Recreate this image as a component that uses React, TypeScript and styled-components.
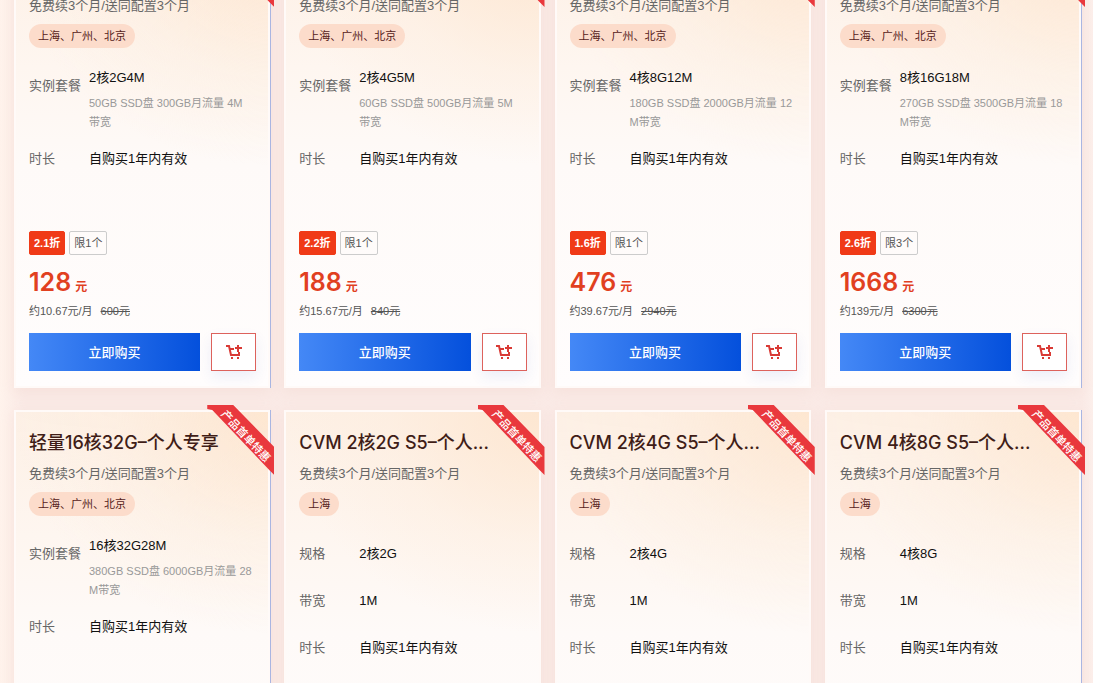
import React from "react";
import styled, { createGlobalStyle } from "styled-components";

const GlobalStyle = createGlobalStyle`
  * { box-sizing: border-box; }
  body {
    margin: 0;
    background: #faeae6;
    font-family: "Liberation Sans", "Noto Sans CJK SC", sans-serif;
    color: #111;
  }
`;

const Page = styled.main`
  height: 100vh;
  overflow: hidden;
  background: linear-gradient(90deg, #fff3ec 0, #faeae6 24px, #faeae6 99%, #fcefeb 100%);
`;

const Grid = styled.div`
  display: grid;
  grid-template-columns: repeat(4, 1fr);
  gap: 22px 14px;
  margin-top: -58px;
  padding: 0 12px 0 14px;
`;

const Card = styled.article<{ $edge: boolean }>`
  position: relative;
  display: flex;
  flex-direction: column;
  min-width: 0;
  min-height: 446px;
  padding: 13px 12px 15px 13px;
  border: 2px solid #fffaf8;
  box-shadow: ${(p) => (p.$edge ? "1px 0 0 #a9b6e2, " : "")}0 4px 12px rgba(240, 205, 195, 0.3);
  background:
    radial-gradient(ellipse 100% 50% at 100% 0, rgba(253, 228, 204, 0.8), rgba(253, 236, 220, 0.4) 60%, rgba(253, 240, 228, 0)),
    linear-gradient(180deg, #fdf0e5 0, #fef6f0 28%, #fefaf8 50%, #fffdfd 100%);
`;

const Title = styled.h3`
  height: 36px;
  margin: 0;
  overflow: hidden;
  color: #401d17;
  font-family: Inter, "Noto Sans CJK SC", sans-serif;
  font-size: 18px;
  font-weight: 500;
  line-height: 36px;
  white-space: nowrap;
`;

const Subtitle = styled.p`
  margin: 3px 0 8px;
  color: #666;
  font-size: 13px;
  line-height: 20px;
`;

const Region = styled.span`
  align-self: flex-start;
  padding: 0 9px;
  border-radius: 12px;
  background: #fcdccb;
  color: #55211a;
  font-size: 11px;
  line-height: 24px;
`;

const Specs = styled.dl`
  margin: 20px 0 0;
`;

const Spec = styled.div<{ $detailed: boolean }>`
  display: grid;
  grid-template-columns: 60px 1fr;
  padding-bottom: ${(p) => (p.$detailed ? 9 : 19)}px;
  font-size: 13px;
  line-height: 20px;
`;

const Label = styled.dt`
  padding-top: 8px;
  color: #666;
`;

const Value = styled.dd<{ $detailed: boolean }>`
  margin: 0;
  padding-top: ${(p) => (p.$detailed ? 0 : 8)}px;
`;

const Detail = styled.p`
  margin: 6px 0 0;
  color: #999;
  font-size: 11px;
  line-height: 19px;
  white-space: pre;
`;

const Purchase = styled.div`
  margin-top: auto;
`;

const Badges = styled.div`
  display: flex;
  gap: 4px;
`;

const Badge = styled.span<{ $filled?: boolean }>`
  padding: 0 4px;
  border: 1px solid ${(p) => (p.$filled ? "#f03a17" : "#ccc")};
  border-radius: 2px;
  background: ${(p) => (p.$filled ? "#f03a17" : "transparent")};
  color: ${(p) => (p.$filled ? "#fff" : "#555")};
  font-size: 11px;
  font-weight: ${(p) => (p.$filled ? 700 : 400)};
  line-height: 22px;
`;

const Price = styled.p`
  display: flex;
  align-items: baseline;
  gap: 4px;
  height: 32px;
  margin: 11px 0 0;
  color: #e1401f;
  font-size: 12px;
  font-weight: 700;
  line-height: 32px;
`;

const Amount = styled.strong`
  font-family: Inter, "Liberation Sans", sans-serif;
  font-size: 25px;
  font-weight: 600;
`;

const Monthly = styled.p`
  display: flex;
  gap: 8px;
  margin: 3px 0 12px;
  color: #555;
  font-size: 11px;
  line-height: 20px;
`;

const Actions = styled.div`
  display: flex;
  gap: 11px;
`;

const BuyButton = styled.button`
  flex: 1;
  height: 38px;
  padding: 0 0 2px;
  border: 0;
  background: linear-gradient(90deg, #4488f6, #0450dc);
  color: #fff;
  font: 500 13px "Liberation Sans", "Noto Sans CJK SC", sans-serif;
`;

const CartButton = styled.button`
  display: grid;
  place-items: center;
  width: 45px;
  height: 38px;
  padding: 0;
  border: 1px solid #dd625c;
  background: #fff;
  box-shadow: 0 6px 14px rgba(60, 90, 200, 0.09);
`;

const Ribbon = styled.div`
  position: absolute;
  top: -7px;
  right: -6px;
  width: 67px;
  height: 70px;
  background: #e9383d;
  clip-path: polygon(0 0, 26px 0, 100% 42px, 100% 100%, 62px 65px, 5px 5px, 0 4px);
`;

const RibbonText = styled.span`
  position: absolute;
  top: 23px;
  left: 1px;
  width: 76px;
  color: #fff;
  font-size: 11px;
  font-weight: 500;
  line-height: 16px;
  text-align: center;
  white-space: nowrap;
  transform: rotate(47deg);
`;

const CartIcon = () => (
  <svg width="16" height="16" viewBox="0 0 16 16" fill="none" stroke="#d93a35" strokeWidth="2" aria-hidden="true">
    <path d="M0 2h3l2 9h8V8M4 5h4M12 1v7M9 4h7" />
    <path d="M5 14h2M11 14h2" />
  </svg>
);

interface SpecItem {
  label: string;
  value: string;
  detail?: string;
}

interface Offer {
  discount: string;
  limit: string;
  amount: string;
  monthly: string;
  original: string;
}

interface Product {
  title?: string;
  region: string;
  specs: SpecItem[];
  offer?: Offer;
}

const duration: SpecItem = { label: "时长", value: "自购买1年内有效" };
const allRegions = "上海、广州、北京";

const bundle = (value: string, detail: string): SpecItem[] => [
  { label: "实例套餐", value, detail },
  duration,
];

const cvm = (value: string): SpecItem[] => [
  { label: "规格", value },
  { label: "带宽", value: "1M" },
  duration,
];

const products: Product[] = [
  {
    region: allRegions,
    specs: bundle("2核2G4M", "50GB SSD盘 300GB月流量 4M\n带宽"),
    offer: { discount: "2.1折", limit: "限1个", amount: "128", monthly: "约10.67元/月", original: "600元" },
  },
  {
    region: allRegions,
    specs: bundle("2核4G5M", "60GB SSD盘 500GB月流量 5M\n带宽"),
    offer: { discount: "2.2折", limit: "限1个", amount: "188", monthly: "约15.67元/月", original: "840元" },
  },
  {
    region: allRegions,
    specs: bundle("4核8G12M", "180GB SSD盘 2000GB月流量 12\nM带宽"),
    offer: { discount: "1.6折", limit: "限1个", amount: "476", monthly: "约39.67元/月", original: "2940元" },
  },
  {
    region: allRegions,
    specs: bundle("8核16G18M", "270GB SSD盘 3500GB月流量 18\nM带宽"),
    offer: { discount: "2.6折", limit: "限3个", amount: "1668", monthly: "约139元/月", original: "6300元" },
  },
  {
    title: "轻量16核32G–个人专享",
    region: allRegions,
    specs: bundle("16核32G28M", "380GB SSD盘 6000GB月流量 28\nM带宽"),
  },
  { title: "CVM 2核2G S5–个人...", region: "上海", specs: cvm("2核2G") },
  { title: "CVM 2核4G S5–个人...", region: "上海", specs: cvm("2核4G") },
  { title: "CVM 4核8G S5–个人...", region: "上海", specs: cvm("4核8G") },
];

const ProductCard = ({ product, edge }: { product: Product; edge: boolean }) => (
  <Card $edge={edge}>
    <Title>{product.title}</Title>
    <Subtitle>免费续3个月/送同配置3个月</Subtitle>
    <Region>{product.region}</Region>
    <Specs>
      {product.specs.map((s) => (
        <Spec key={s.label} $detailed={!!s.detail}>
          <Label>{s.label}</Label>
          <Value $detailed={!!s.detail}>
            {s.value}
            {s.detail && <Detail>{s.detail}</Detail>}
          </Value>
        </Spec>
      ))}
    </Specs>
    {product.offer && (
      <Purchase>
        <Badges>
          <Badge $filled>{product.offer.discount}</Badge>
          <Badge>{product.offer.limit}</Badge>
        </Badges>
        <Price>
          <Amount>{product.offer.amount}</Amount>元
        </Price>
        <Monthly>
          <span>{product.offer.monthly}</span>
          <s>{product.offer.original}</s>
        </Monthly>
        <Actions>
          <BuyButton type="button">立即购买</BuyButton>
          <CartButton type="button" aria-label="加入购物车">
            <CartIcon />
          </CartButton>
        </Actions>
      </Purchase>
    )}
    <Ribbon>{product.title && <RibbonText>产品首单特惠</RibbonText>}</Ribbon>
  </Card>
);

export default function App() {
  return (
    <Page>
      <GlobalStyle />
      <Grid>
        {products.map((p, i) => (
          <ProductCard key={i} product={p} edge={i % 4 === 0 || i % 4 === 3} />
        ))}
      </Grid>
    </Page>
  );
}
